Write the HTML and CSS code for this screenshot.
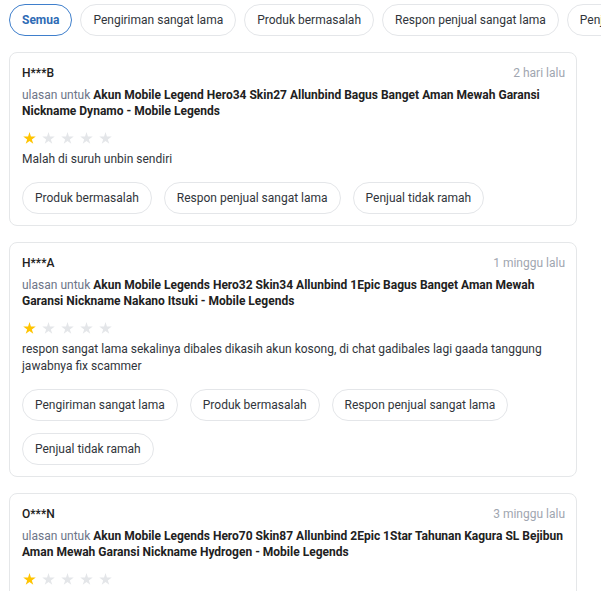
FILE: index.html
```html
<!DOCTYPE html>
<html lang="id">
<head>
  <meta charset="UTF-8" />
  <meta name="viewport" content="width=device-width,initial-scale=1.0"/>
  <title>Ulasan</title>
  <link rel="stylesheet" href="styles.css">
</head>
<body>
  <div class="filters">
    <span class="chip active">Semua</span>
    <span class="chip">Pengiriman sangat lama</span>
    <span class="chip">Produk bermasalah</span>
    <span class="chip">Respon penjual sangat lama</span>
    <span class="chip">Penjual tidak ramah</span>
  </div>

  <div class="list">
    <div class="review">
      <div class="review-head">
        <span class="user">H***B</span>
        <span class="time">2 hari lalu</span>
      </div>
      <div class="product">ulasan untuk <b>Akun Mobile Legend Hero34 Skin27 Allunbind Bagus Banget Aman Mewah Garansi Nickname Dynamo - Mobile Legends</b></div>
      <div class="stars">
        <span class="star on"></span><span class="star"></span><span class="star"></span><span class="star"></span><span class="star"></span>
      </div>
      <div class="text">Malah di suruh unbin sendiri</div>
      <div class="tags">
        <span class="chip">Produk bermasalah</span>
        <span class="chip">Respon penjual sangat lama</span>
        <span class="chip">Penjual tidak ramah</span>
      </div>
    </div>

    <div class="review">
      <div class="review-head">
        <span class="user">H***A</span>
        <span class="time">1 minggu lalu</span>
      </div>
      <div class="product">ulasan untuk <b>Akun Mobile Legends Hero32 Skin34 Allunbind 1Epic Bagus Banget Aman Mewah Garansi Nickname Nakano Itsuki - Mobile Legends</b></div>
      <div class="stars">
        <span class="star on"></span><span class="star"></span><span class="star"></span><span class="star"></span><span class="star"></span>
      </div>
      <div class="text">respon sangat lama sekalinya dibales dikasih akun kosong, di chat gadibales lagi gaada tanggung jawabnya fix scammer</div>
      <div class="tags">
        <span class="chip">Pengiriman sangat lama</span>
        <span class="chip">Produk bermasalah</span>
        <span class="chip">Respon penjual sangat lama</span>
        <span class="chip">Penjual tidak ramah</span>
      </div>
    </div>

    <div class="review">
      <div class="review-head">
        <span class="user">O***N</span>
        <span class="time">3 minggu lalu</span>
      </div>
      <div class="product">ulasan untuk <b>Akun Mobile Legends Hero70 Skin87 Allunbind 2Epic 1Star Tahunan Kagura SL Bejibun Aman Mewah Garansi Nickname Hydrogen - Mobile Legends</b></div>
      <div class="stars">
        <span class="star on"></span><span class="star"></span><span class="star"></span><span class="star"></span><span class="star"></span>
      </div>
      <div class="text">Akun tidak sesuai deskripsi</div>
      <div class="tags">
        <span class="chip">Produk bermasalah</span>
      </div>
    </div>
  </div>
</body>
</html>
```

FILE: styles.css
```css
html, body {
  margin: 0;
  background: #fff;
  font-family: Roboto, 'Liberation Sans', Arial, sans-serif;
  font-size: 12px;
  color: #212121;
}
.filters {
  display: flex;
  gap: 8px;
  padding: 4px 0 0 9px;
  overflow: hidden;
  white-space: nowrap;
}
.chip {
  flex: none;
  display: inline-flex;
  align-items: center;
  height: 32px;
  box-sizing: border-box;
  padding: 0 12px;
  border: 1px solid #e4e6e9;
  border-radius: 16px;
  color: #31353b;
  font-size: 12px;
  background: #fff;
}
.chip.active {
  border-color: #3f7fcc;
  color: #2e6bb5;
  font-weight: 700;
}
.list {
  display: flex;
  flex-direction: column;
  gap: 16px;
  padding: 16px 24px 0 9px;
}
.review {
  border: 1px solid #e5e7e9;
  border-radius: 8px;
  padding: 12px 13px 11px 12px;
}
.review-head {
  display: flex;
  justify-content: space-between;
  line-height: 16px;
}
.user {
  font-weight: 500;
  color: #212121;
}
.time {
  color: #9fa6b0;
  margin-right: -2px;
}
.product {
  margin-top: 6px;
  line-height: 16px;
  color: #6d7588;
}
.product b {
  color: #212121;
  font-weight: 700;
}
.stars {
  display: flex;
  gap: 6px;
  margin-top: 13px;
  height: 12px;
  padding-left: 1px;
}
.star {
  width: 13px;
  height: 13px;
  background: #e4e6e9;
  clip-path: polygon(50% 0%, 61% 35%, 98% 35%, 68% 57%, 79% 91%, 50% 70%, 21% 91%, 32% 57%, 2% 35%, 39% 35%);
}
.star.on {
  background: #ffc400;
}
.text {
  margin-top: 7px;
  line-height: 17px;
  color: #31353b;
}
.tags {
  display: flex;
  flex-wrap: wrap;
  gap: 12px;
  margin-top: 14px;
}
```
